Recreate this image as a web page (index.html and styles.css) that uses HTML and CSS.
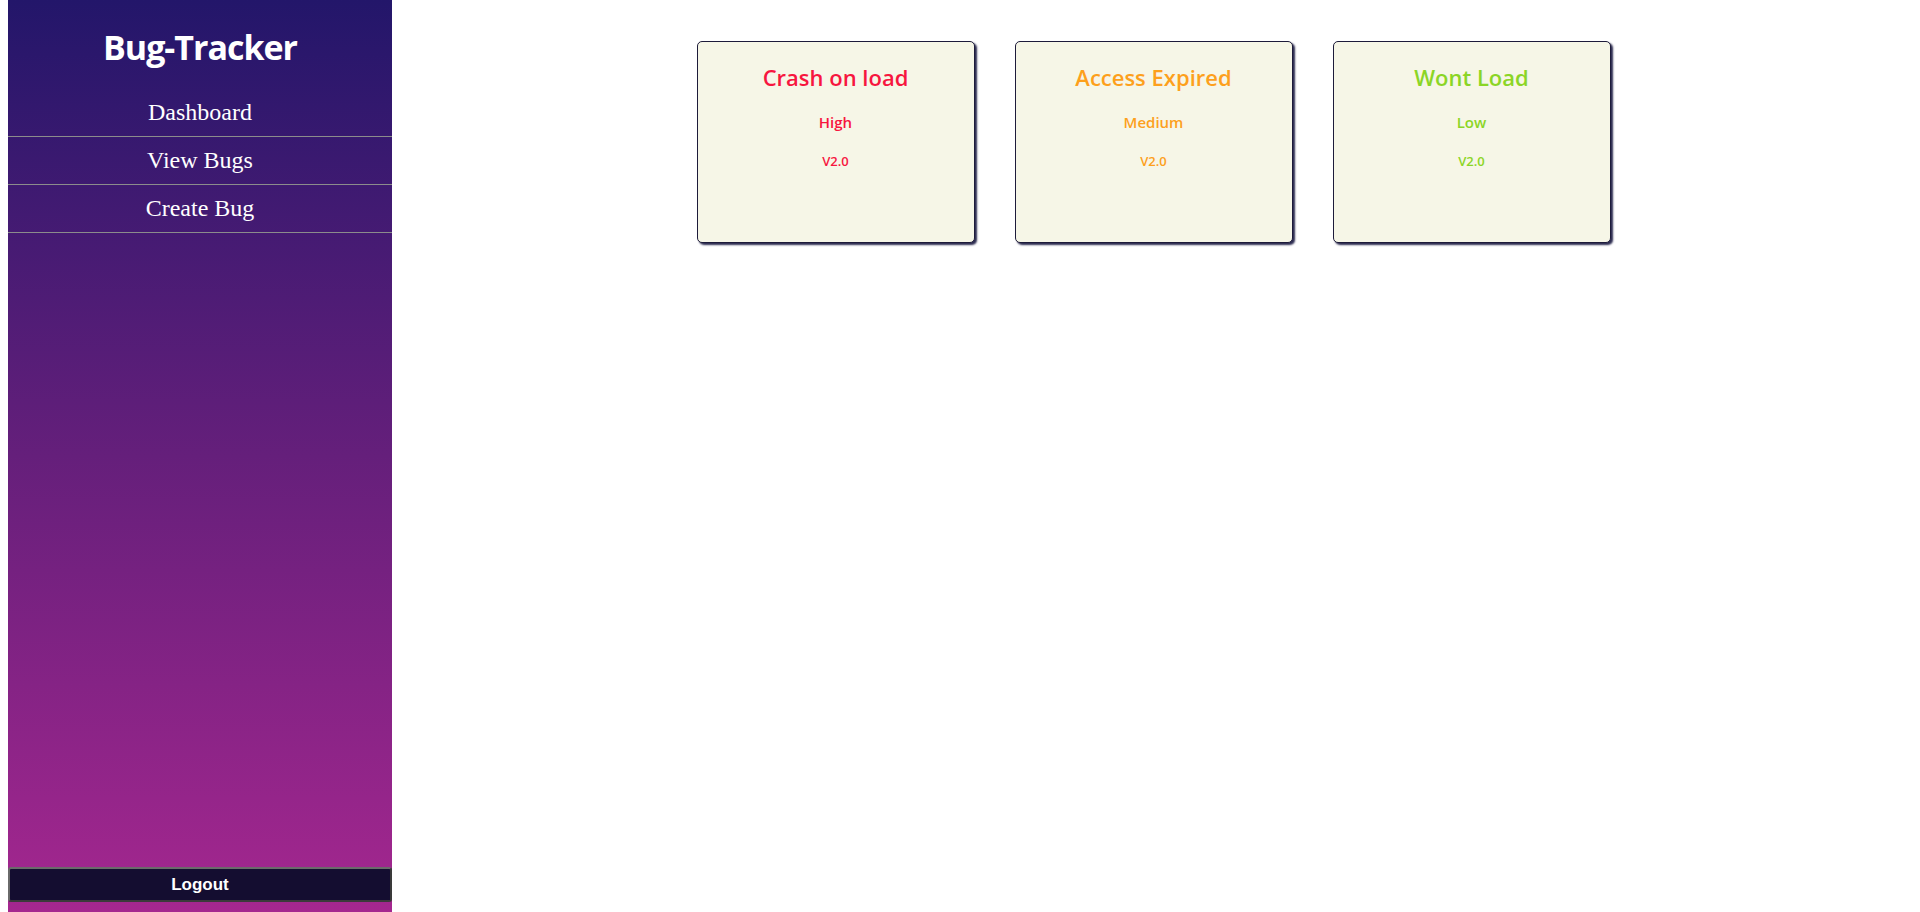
FILE: index.html
```html
<!DOCTYPE html>
<html lang="en">
<head>
<meta charset="utf-8">
<title>Bug-Tracker</title>
<link rel="stylesheet" href="styles.css">
</head>
<body>
<aside class="sidebar">
  <h1 class="brand">Bug-Tracker</h1>
  <nav class="nav">
    <a class="nav-item" href="#">Dashboard</a>
    <a class="nav-item" href="#">View Bugs</a>
    <a class="nav-item" href="#">Create Bug</a>
  </nav>
  <button class="logout" type="button">Logout</button>
</aside>
<main class="main">
  <div class="cards">
    <div class="card high">
      <h2 class="card-title">Crash on load</h2>
      <p class="card-priority">High</p>
      <p class="card-version">V2.0</p>
    </div>
    <div class="card medium">
      <h2 class="card-title">Access Expired</h2>
      <p class="card-priority">Medium</p>
      <p class="card-version">V2.0</p>
    </div>
    <div class="card low">
      <h2 class="card-title">Wont Load</h2>
      <p class="card-priority">Low</p>
      <p class="card-version">V2.0</p>
    </div>
  </div>
</main>
</body>
</html>
```

FILE: styles.css
```css
html, body {
  height: 100%;
}
body {
  margin: 0 8px;
  background: #ffffff;
  font-family: "Liberation Serif", "Times New Roman", serif;
}
.sidebar {
  position: fixed;
  left: 8px;
  top: 0;
  width: 384px;
  height: 100vh;
  display: flex;
  flex-direction: column;
  background: linear-gradient(to bottom, #23166a 0%, #651f7b 50%, #a5278f 100%);
}
.brand {
  margin: 0;
  padding-top: 24px;
  height: 89px;
  box-sizing: border-box;
  text-align: center;
  color: #ffffff;
  font-family: "Open Sans", "Noto Sans", sans-serif;
  font-size: 34px;
  font-weight: 700;
  line-height: 46px;
  letter-spacing: -1px;
}
.nav {
  display: flex;
  flex-direction: column;
}
.nav-item {
  display: block;
  height: 47px;
  line-height: 47px;
  text-align: center;
  color: #ffffff;
  text-decoration: none;
  font-size: 24px;
  border-bottom: 1px solid #8c8c8c;
}
.logout {
  margin-top: auto;
  margin-bottom: 10px;
  width: 384px;
  height: 35px;
  background: #140d30;
  color: #ffffff;
  font-family: "Liberation Sans", Arial, sans-serif;
  font-size: 17px;
  font-weight: 700;
  border: 2px solid #3a3a3a;
  border-top-color: #6a6a6a;
  border-left-color: #6a6a6a;
  border-radius: 3px;
  padding: 0;
}
.main {
  margin-left: 384px;
}
.cards {
  display: flex;
  justify-content: center;
  gap: 40px;
  padding-top: 41px;
  padding-left: 3px;
}
.card {
  width: 276px;
  height: 200px;
  background: #f6f6e7;
  border: 1px solid #1d1b3a;
  border-radius: 5px;
  box-shadow: 2px 2px 2px #2b2a4f;
  text-align: center;
  font-family: "Open Sans", "Noto Sans", sans-serif;
}
.card-title {
  margin: 21px 0 0;
  font-size: 22px;
  line-height: 28px;
  font-weight: 600;
}
.card-priority {
  margin: 21px 0 0;
  font-size: 15px;
  line-height: 20px;
  font-weight: 600;
}
.card-version {
  margin: 21px 0 0;
  font-size: 13px;
  line-height: 16px;
  font-weight: 600;
}
.high { color: #f7163f; }
.medium { color: #fda01c; }
.low { color: #8bd526; }
```
